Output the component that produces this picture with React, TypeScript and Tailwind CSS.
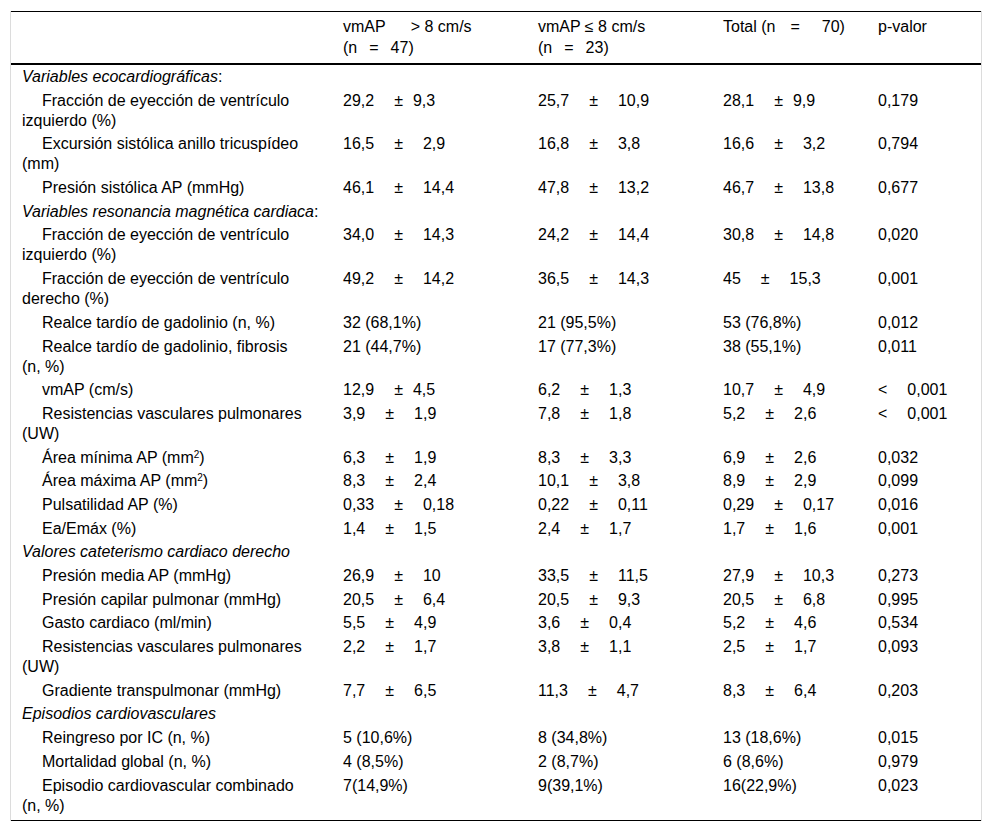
import type { ReactNode } from "react";

type Row =
  | { section: ReactNode }
  | { label: ReactNode; cells: ReactNode[] };

// a ± b, with the wide gaps of the source table; a few cells sit tighter
function pm(a: string, b: string, tight = false) {
  return (
    <span className="whitespace-nowrap">
      {a}
      <span className="ml-[20px]">±</span>
      <span className={tight ? "ml-[10px]" : "ml-[20px]"}>{b}</span>
    </span>
  );
}

function lt(v: string) {
  return (
    <span className="whitespace-nowrap">
      &lt;<span className="ml-[20px]">{v}</span>
    </span>
  );
}

const sq = <sup className="text-[10px] leading-none">2</sup>;

const rows: Row[] = [
  { section: <><i>Variables ecocardiográficas</i>:</> },
  { label: "Fracción de eyección de ventrículo izquierdo (%)", cells: [pm("29,2", "9,3", true), pm("25,7", "10,9"), pm("28,1", "9,9", true), "0,179"] },
  { label: "Excursión sistólica anillo tricuspídeo (mm)", cells: [pm("16,5", "2,9"), pm("16,8", "3,8"), pm("16,6", "3,2"), "0,794"] },
  { label: "Presión sistólica AP (mmHg)", cells: [pm("46,1", "14,4"), pm("47,8", "13,2"), pm("46,7", "13,8"), "0,677"] },
  { section: <><i>Variables resonancia magnética cardiaca</i>:</> },
  { label: "Fracción de eyección de ventrículo izquierdo (%)", cells: [pm("34,0", "14,3"), pm("24,2", "14,4"), pm("30,8", "14,8"), "0,020"] },
  { label: "Fracción de eyección de ventrículo derecho (%)", cells: [pm("49,2", "14,2"), pm("36,5", "14,3"), pm("45", "15,3"), "0,001"] },
  { label: "Realce tardío de gadolinio (n, %)", cells: ["32 (68,1%)", "21 (95,5%)", "53 (76,8%)", "0,012"] },
  { label: "Realce tardío de gadolinio, fibrosis (n, %)", cells: ["21 (44,7%)", "17 (77,3%)", "38 (55,1%)", "0,011"] },
  { label: "vmAP (cm/s)", cells: [pm("12,9", "4,5", true), pm("6,2", "1,3"), pm("10,7", "4,9"), lt("0,001")] },
  { label: "Resistencias vasculares pulmonares (UW)", cells: [pm("3,9", "1,9"), pm("7,8", "1,8"), pm("5,2", "2,6"), lt("0,001")] },
  { label: <>Área mínima AP (mm{sq})</>, cells: [pm("6,3", "1,9"), pm("8,3", "3,3"), pm("6,9", "2,6"), "0,032"] },
  { label: <>Área máxima AP (mm{sq})</>, cells: [pm("8,3", "2,4"), pm("10,1", "3,8"), pm("8,9", "2,9"), "0,099"] },
  { label: "Pulsatilidad AP (%)", cells: [pm("0,33", "0,18"), pm("0,22", "0,11"), pm("0,29", "0,17"), "0,016"] },
  { label: "Ea/Emáx (%)", cells: [pm("1,4", "1,5"), pm("2,4", "1,7"), pm("1,7", "1,6"), "0,001"] },
  { section: <i>Valores cateterismo cardiaco derecho</i> },
  { label: "Presión media AP (mmHg)", cells: [pm("26,9", "10"), pm("33,5", "11,5"), pm("27,9", "10,3"), "0,273"] },
  { label: "Presión capilar pulmonar (mmHg)", cells: [pm("20,5", "6,4"), pm("20,5", "9,3"), pm("20,5", "6,8"), "0,995"] },
  { label: "Gasto cardiaco (ml/min)", cells: [pm("5,5", "4,9"), pm("3,6", "0,4"), pm("5,2", "4,6"), "0,534"] },
  { label: "Resistencias vasculares pulmonares (UW)", cells: [pm("2,2", "1,7"), pm("3,8", "1,1"), pm("2,5", "1,7"), "0,093"] },
  { label: "Gradiente transpulmonar (mmHg)", cells: [pm("7,7", "6,5"), pm("11,3", "4,7"), pm("8,3", "6,4"), "0,203"] },
  { section: <i>Episodios cardiovasculares</i> },
  { label: "Reingreso por IC (n, %)", cells: ["5 (10,6%)", "8 (34,8%)", "13 (18,6%)", "0,015"] },
  { label: "Mortalidad global (n, %)", cells: ["4 (8,5%)", "2 (8,7%)", "6 (8,6%)", "0,979"] },
  { label: "Episodio cardiovascular combinado (n, %)", cells: ["7(14,9%)", "9(39,1%)", "16(22,9%)", "0,023"] },
];

const cellPad = ["pl-[11px] pr-[27px]", "pl-[10px]", "pl-[10px]", "pl-[10px]", "pl-[10px]"];

export default function App() {
  return (
    <div className="min-h-[832px] bg-white pt-[11px] text-[16px] text-black font-['Liberation_Sans',Arial,sans-serif]">
      <div className="ml-[10px] w-[972px] border-x border-[#dcdcdc]">
        <table className="w-[970px] table-fixed border-collapse">
          <colgroup>
            <col className="w-[322px]" />
            <col className="w-[195px]" />
            <col className="w-[185px]" />
            <col className="w-[155px]" />
            <col className="w-[113px]" />
          </colgroup>
          <thead>
            <tr className="border-t border-b-2 border-black align-top text-left leading-[21px]">
              <th className={`${cellPad[0]} pt-[4px] pb-[5px] font-normal`}></th>
              <th className={`${cellPad[1]} pt-[4px] pb-[5px] font-normal`}>
                vmAP<span className="ml-[25px]">&gt; 8 cm/s</span>
                <br />
                (n<span className="ml-[12px]">=</span>
                <span className="ml-[12px]">47)</span>
              </th>
              <th className={`${cellPad[2]} pt-[4px] pb-[5px] font-normal`}>
                vmAP ≤ 8 cm/s
                <br />
                (n<span className="ml-[12px]">=</span>
                <span className="ml-[12px]">23)</span>
              </th>
              <th className={`${cellPad[3]} pt-[4px] pb-[5px] font-normal whitespace-nowrap`}>
                Total (n<span className="ml-[15px]">=</span>
                <span className="ml-[22px]">70)</span>
              </th>
              <th className={`${cellPad[4]} pt-[4px] pb-[5px] font-normal`}>p-valor</th>
            </tr>
          </thead>
          <tbody className="border-b border-black">
            {rows.map((row, i) => {
              const last = i === rows.length - 1;
              const py = last ? "pt-[2px] pb-[4px]" : "pt-[2px] pb-[1.7px]";
              if ("section" in row) {
                return (
                  <tr key={i} className="align-top leading-[20px]">
                    <td colSpan={5} className={`${cellPad[0]} ${py}`}>
                      {row.section}
                    </td>
                  </tr>
                );
              }
              return (
                <tr key={i} className="align-top leading-[20px]">
                  <td className={`${cellPad[0]} ${py}`}>
                    <div className="indent-[20px]">{row.label}</div>
                  </td>
                  {row.cells.map((c, j) => (
                    <td key={j} className={`${cellPad[j + 1]} ${py}`}>
                      {c}
                    </td>
                  ))}
                </tr>
              );
            })}
          </tbody>
        </table>
      </div>
    </div>
  );
}
